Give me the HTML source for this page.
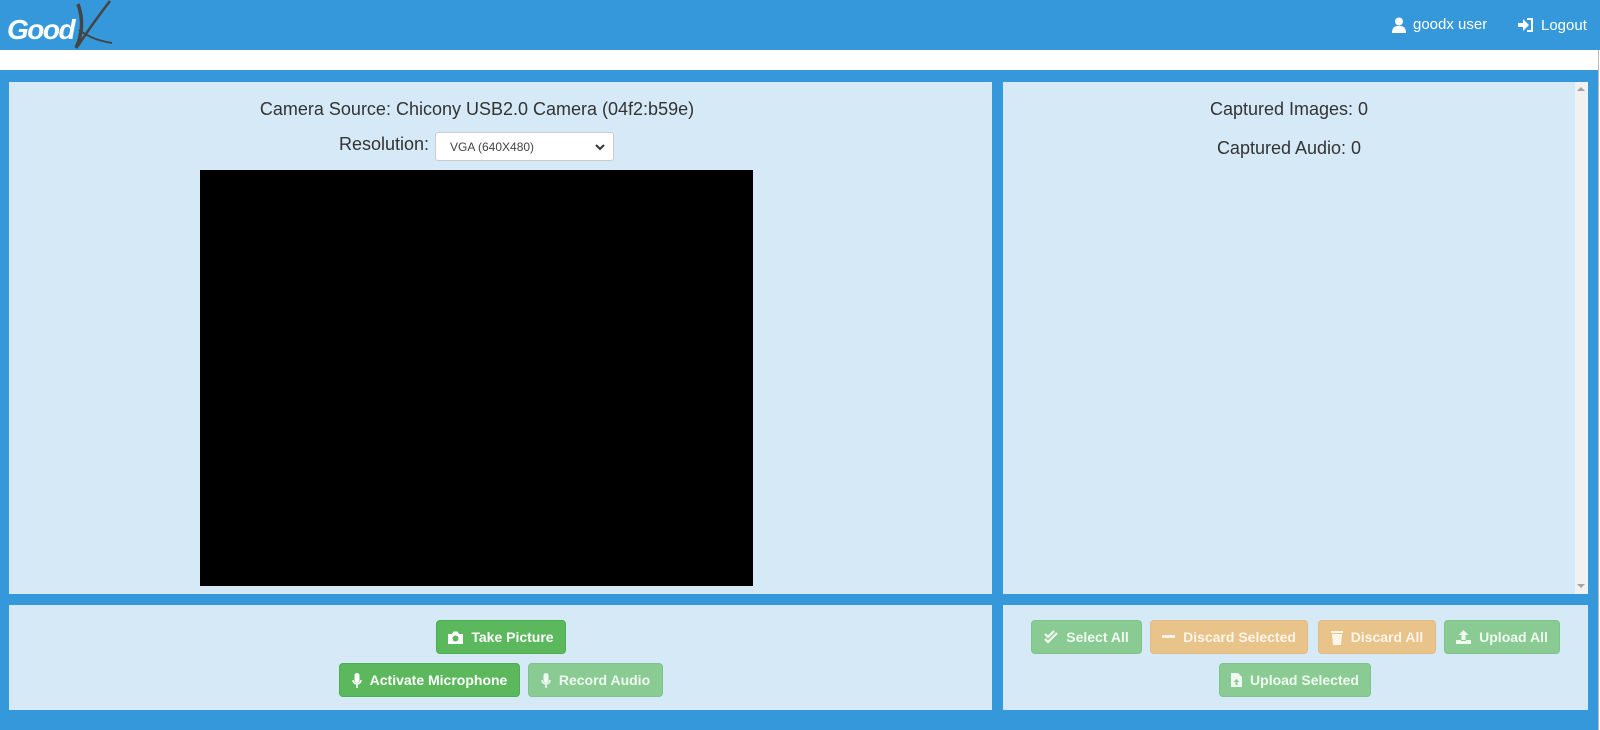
<!DOCTYPE html>
<html><head><style>
*{box-sizing:border-box;margin:0;padding:0}
body{width:1600px;height:730px;background:#3598db;font-family:"Liberation Sans",sans-serif;position:relative;overflow:hidden;color:#333}
.white{position:absolute;left:0;top:50px;width:1598px;height:20px;background:#fff}
.edge{position:absolute;left:1598px;top:50px;width:2px;height:680px;background:#fff;border-left:1px solid #bbb}
.p{position:absolute;background:#d6e9f7}
.btn{position:absolute;height:34px;border-radius:4px;color:#fff;font-weight:bold;font-size:14px;display:flex;align-items:center;justify-content:center;gap:8px}
.btn svg{flex:none}
.g{background:#5cb85c;border:1px solid #4cae4c}
.gl{background:#89cb92;border:1px solid #7dc488;color:#f0f9f1}
.o{background:#e8c38a;border:1px solid #e2bb80;color:#fcf5ea}
.t{position:absolute;font-size:18px;white-space:nowrap}
</style></head><body>
<div style="position:absolute;left:7px;top:14px;font:italic bold 28px 'Liberation Sans',sans-serif;color:#fff;letter-spacing:-1.5px">Good</div>
<svg style="position:absolute;left:70px;top:0" width="45" height="50"><path d="M8 4 C13 18 13 33 6 48" stroke="#444" stroke-width="3.5" fill="none"/><path d="M40 1 C30 14 18 30 8 46" stroke="#444" stroke-width="2.5" fill="none"/><path d="M9 30 C20 38 30 41 42 43" stroke="#444" stroke-width="2" fill="none"/></svg>
<svg style="position:absolute;left:1392px;top:17px" width="14" height="16" viewBox="0 0 14 16"><circle cx="7" cy="4.5" r="4" fill="#fff"/><path d="M0 16 C0 10 3 9 7 9 C11 9 14 10 14 16Z" fill="#fff"/></svg>
<div style="position:absolute;left:1413px;top:16px;color:#fff;font-size:15px">goodx user</div>
<svg style="position:absolute;left:1518px;top:18px" width="16" height="14" viewBox="0 0 16 14"><path d="M0 5h5V1l6 6-6 6V9H0z" fill="#fff"/><path d="M9 1h5v12H9" stroke="#fff" stroke-width="2" fill="none"/></svg>
<div style="position:absolute;left:1541px;top:17px;color:#fff;font-size:15px">Logout</div>
<div class="white"></div><div class="edge"></div>
<div class="p" style="left:9px;top:82px;width:983px;height:512px"></div>
<div class="p" style="left:1003px;top:82px;width:585px;height:512px"></div>
<div style="position:absolute;left:1575px;top:82px;width:13px;height:512px;background:#f1f1f1"></div>
<div style="position:absolute;left:1577px;top:87px;border:4px solid transparent;border-bottom:4px solid #a3a3a3;border-top:0"></div>
<div style="position:absolute;left:1577px;top:584px;border:4px solid transparent;border-top:4px solid #a3a3a3;border-bottom:0"></div>
<div class="p" style="left:9px;top:605px;width:983px;height:105px"></div>
<div class="p" style="left:1003px;top:605px;width:585px;height:105px"></div>
<div class="t" style="left:77px;width:800px;text-align:center;top:99px">Camera Source: Chicony USB2.0 Camera (04f2:b59e)</div>
<div class="t" style="left:339px;top:134px">Resolution:</div>
<div style="position:absolute;left:435px;top:132px;width:179px;height:29px;background:#fff;border:1px solid #ccc;border-radius:3px;font-size:12px;padding:7px 0 0 14px;color:#444">VGA (640X480)<svg style="position:absolute;right:8px;top:11px" width="10" height="7"><path d="M1 1l4 4 4-4" stroke="#333" stroke-width="2" fill="none"/></svg></div>
<div style="position:absolute;left:200px;top:170px;width:553px;height:416px;background:#000"></div>
<div class="t" style="left:1003px;width:572px;text-align:center;top:99px">Captured Images: 0</div>
<div class="t" style="left:1003px;width:572px;text-align:center;top:138px">Captured Audio: 0</div>
<div class="btn g" style="left:436px;top:620px;width:130px"><svg width="15" height="13" viewBox="0 0 15 13"><path d="M0 3h4l1.5-2.5h4L11 3h4v10H0z" fill="#fff"/><circle cx="7.5" cy="7.5" r="3" fill="#5cb85c"/></svg>Take Picture</div>
<div class="btn g" style="left:339px;top:663px;width:181px"><svg width="10" height="15" viewBox="0 0 10 15"><rect x="2.5" y="0" width="5" height="10" rx="2.5" fill="#fff"/><path d="M1 7a4 4 0 0 0 8 0M5 11v4" stroke="#fff" stroke-width="1.5" fill="none"/></svg>Activate Microphone</div>
<div class="btn gl" style="left:528px;top:663px;width:135px"><svg width="10" height="15" viewBox="0 0 10 15"><rect x="2.5" y="0" width="5" height="10" rx="2.5" fill="#f0f9f1"/><path d="M1 7a4 4 0 0 0 8 0M5 11v4" stroke="#f0f9f1" stroke-width="1.5" fill="none"/></svg>Record Audio</div>
<div class="btn gl" style="left:1031px;top:620px;width:111px"><svg width="14" height="14" viewBox="0 0 14 14"><path d="M1 4l3 3 6-6M1 9l3 3 9-9" stroke="#f0f9f1" stroke-width="2.2" fill="none"/></svg>Select All</div>
<div class="btn o" style="left:1150px;top:620px;width:158px"><svg width="13" height="4"><rect width="13" height="3" fill="#fcf5ea"/></svg>Discard Selected</div>
<div class="btn o" style="left:1318px;top:620px;width:118px"><svg width="12" height="15" viewBox="0 0 12 15"><rect x="0" y="1" width="12" height="2" fill="#fcf5ea"/><path d="M1 4h10l-1 11H2z" fill="#fcf5ea"/></svg>Discard All</div>
<div class="btn gl" style="left:1444px;top:620px;width:116px"><svg width="15" height="14" viewBox="0 0 15 14"><path d="M7.5 0l5 5H9.5v5h-4V5h-3z" fill="#f0f9f1"/><path d="M0 10h5v1h5v-1h5v4H0z" fill="#f0f9f1"/></svg>Upload All</div>
<div class="btn gl" style="left:1219px;top:663px;width:152px"><svg width="11" height="14" viewBox="0 0 11 14"><path d="M0 0h7l4 4v10H0z" fill="#f0f9f1"/><path d="M5.5 6l3 3H6.5v3h-2V9h-2z" fill="#89cb92"/></svg>Upload Selected</div>
</body></html>
